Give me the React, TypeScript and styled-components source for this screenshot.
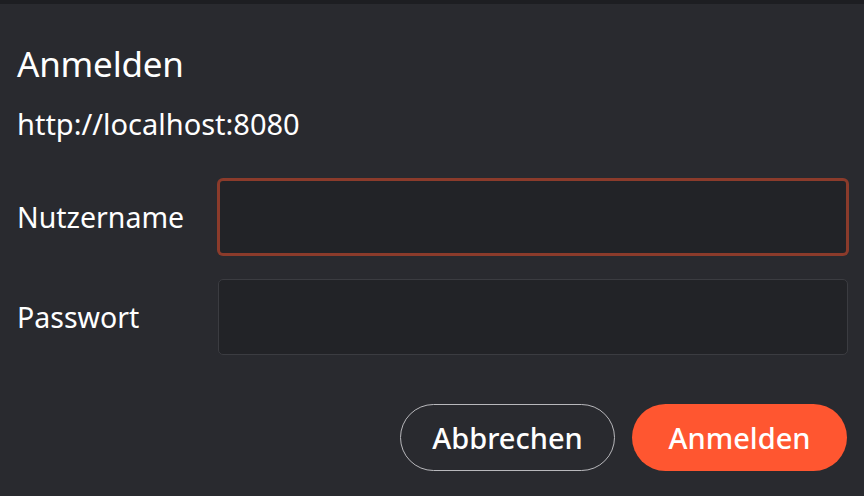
import React from "react";
import styled, { createGlobalStyle } from "styled-components";

const GlobalStyle = createGlobalStyle`
  html, body {
    margin: 0;
    padding: 0;
    background: #292a2f;
  }
  body {
    font-family: "Noto Sans", "Open Sans", sans-serif;
    color: #ffffff;
  }
`;

const TopStrip = styled.div`
  height: 4px;
  background: #1d1e22;
`;

const DialogRoot = styled.div`
  width: 864px;
  height: 496px;
  box-sizing: border-box;
  background: #292a2f;
  display: flex;
  flex-direction: column;
`;

const Body = styled.div`
  display: flex;
  flex-direction: column;
  padding: 0 16px 0 17px;
`;

const Title = styled.h1`
  margin: 38px 0 0 0;
  font-size: 35px;
  font-weight: 400;
  line-height: 44px;
  letter-spacing: -0.2px;
`;

const Url = styled.div`
  margin-top: 19px;
  font-size: 29px;
  line-height: 38px;
`;

const Form = styled.div`
  margin-top: 36px;
  display: grid;
  grid-template-columns: 201px 1fr;
  row-gap: 24px;
  align-items: center;
`;

const Label = styled.label`
  font-size: 28.5px;
  line-height: 36px;
`;

const Input = styled.input<{ $focused?: boolean }>`
  box-sizing: border-box;
  height: 76px;
  width: 100%;
  margin: 0;
  background: #222327;
  border: ${(p) => (p.$focused ? "2px solid #8b3b2b" : "1px solid #3b3c41")};
  box-shadow: ${(p) => (p.$focused ? "0 0 0 1px #8b3b2b" : "none")};
  border-radius: 5px;
  outline: none;
  color: #fff;
  font: inherit;
  font-size: 24px;
  padding: 0 16px;
`;

const Actions = styled.div`
  margin-top: 49px;
  display: flex;
  justify-content: flex-end;
  gap: 17px;
  padding-right: 1px;
`;

const Button = styled.button<{ $primary?: boolean }>`
  box-sizing: border-box;
  width: 215px;
  height: 67px;
  border-radius: 34px;
  font-family: "Noto Sans", "Open Sans", sans-serif;
  font-size: 29px;
  font-weight: 500;
  color: #ffffff;
  cursor: pointer;
  background: ${(p) => (p.$primary ? "#ff5630" : "transparent")};
  border: ${(p) => (p.$primary ? "none" : "1px solid #b8b8bc")};
`;

export default function App() {
  return (
    <>
      <GlobalStyle />
      <DialogRoot>
        <TopStrip />
        <Body>
          <Title>Anmelden</Title>
          <Url>http://localhost:8080</Url>
          <Form>
            <Label htmlFor="user">Nutzername</Label>
            <Input id="user" $focused />
            <Label htmlFor="pass">Passwort</Label>
            <Input id="pass" type="password" />
          </Form>
          <Actions>
            <Button>Abbrechen</Button>
            <Button $primary>Anmelden</Button>
          </Actions>
        </Body>
      </DialogRoot>
    </>
  );
}
